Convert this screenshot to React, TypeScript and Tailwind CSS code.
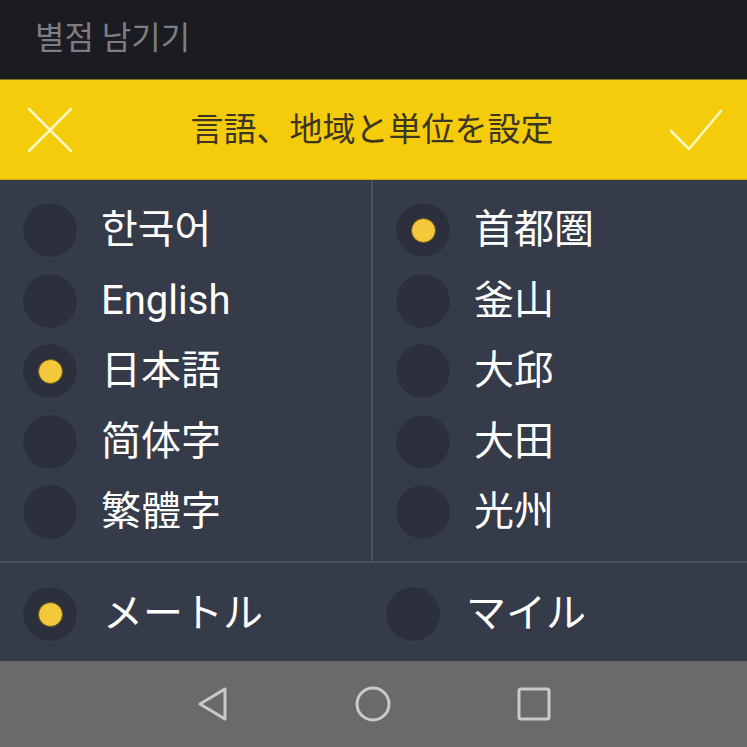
import React from "react";

const JP = { fontFamily: 'Roboto, "Noto Sans CJK JP", sans-serif' };
const KR = { fontFamily: 'Roboto, "Noto Sans CJK KR", sans-serif' };

function Radio({ checked }: { checked?: boolean }) {
  return (
    <div className="w-[56px] h-[56px] shrink-0 rounded-full bg-[#2b303c] border border-[#3a404d] flex items-center justify-center">
      {checked && (
        <div className="w-[25px] h-[25px] rounded-full bg-[#f3c83a] border border-[#6b5a1c]" />
      )}
    </div>
  );
}

function Option({
  label,
  checked,
  kr,
}: {
  label: string;
  checked?: boolean;
  kr?: boolean;
}) {
  return (
    <div className="h-[70.5px] flex items-center gap-[23px]">
      <Radio checked={checked} />
      <span
        className="text-[40px] leading-none text-white"
        style={kr ? KR : JP}
      >
        {label}
      </span>
    </div>
  );
}

export default function App() {
  const left = [
    { label: "한국어", kr: true },
    { label: "English" },
    { label: "日本語", checked: true },
    { label: "简体字" },
    { label: "繁體字" },
  ];
  const right = [
    { label: "首都圏", checked: true },
    { label: "釜山" },
    { label: "大邱" },
    { label: "大田" },
    { label: "光州" },
  ];
  return (
    <div className="w-[747px] h-[747px] flex flex-col bg-[#353b49] overflow-hidden">
      {/* top dimmed bar */}
      <div className="h-[79px] shrink-0 bg-[#1b1c21] flex items-center pl-[35px] pb-[4px]">
        <span className="text-[32px] leading-none text-[#7d7e84]" style={KR}>
          별점 남기기
        </span>
      </div>

      {/* yellow header */}
      <div className="h-[101px] shrink-0 bg-[#f5cc0b] border-t border-[#8a7516] border-b border-b-[#c9a914] flex items-center justify-between px-[26px]">
        <svg width="48" height="48" viewBox="0 0 48 48" className="shrink-0">
          <path
            d="M3 3 L45 45 M45 3 L3 45"
            stroke="#fff7c2"
            strokeWidth="2.6"
            strokeLinecap="round"
            fill="none"
          />
        </svg>
        <span
          className="text-[33px] leading-none text-[#3b3524] ml-[2px]"
          style={JP}
        >
          言語、地域と単位を設定
        </span>
        <svg width="56" height="48" viewBox="0 0 56 48" className="shrink-0 mr-[-3px]">
          <path
            d="M3 25 L21 43 L53 5"
            stroke="#fff7c2"
            strokeWidth="2.6"
            strokeLinecap="round"
            strokeLinejoin="round"
            fill="none"
          />
        </svg>
      </div>

      {/* two columns */}
      <div className="h-[383px] shrink-0 flex border-b-2 border-[#4a505e]">
        <div className="w-[373px] shrink-0 pt-[15px] pl-[22px] border-r-2 border-[#4a505e]">
          {left.map((o) => (
            <Option key={o.label} {...o} />
          ))}
        </div>
        <div className="flex-1 pt-[15px] pl-[22px]">
          {right.map((o) => (
            <Option key={o.label} {...o} />
          ))}
        </div>
      </div>

      {/* units */}
      <div className="h-[98px] shrink-0 flex items-center">
        <div className="w-[363px] shrink-0 pl-[22px] flex items-center gap-[25px] pt-[4px]">
          <Radio checked />
          <span className="text-[40px] leading-none text-white" style={JP}>
            メートル
          </span>
        </div>
        <div className="flex items-center gap-[25px] pl-[22px] pt-[4px]">
          <Radio />
          <span className="text-[40px] leading-none text-white" style={JP}>
            マイル
          </span>
        </div>
      </div>

      {/* nav bar */}
      <div className="flex-1 bg-[#6a6a6a] flex items-center justify-center">
        <div className="flex items-center gap-[126px] pb-[1px]">
          <svg width="32" height="36" viewBox="0 0 32 36">
            <path
              d="M28 3 L28 33 L3 18 Z"
              stroke="#cacaca"
              strokeWidth="3"
              strokeLinejoin="round"
              fill="none"
            />
          </svg>
          <svg width="36" height="36" viewBox="0 0 36 36">
            <circle cx="18" cy="18" r="16" stroke="#cacaca" strokeWidth="3" fill="none" />
          </svg>
          <svg width="34" height="34" viewBox="0 0 34 34">
            <rect x="2" y="2" width="30" height="30" rx="2" stroke="#cacaca" strokeWidth="3" fill="none" />
          </svg>
        </div>
      </div>
    </div>
  );
}
